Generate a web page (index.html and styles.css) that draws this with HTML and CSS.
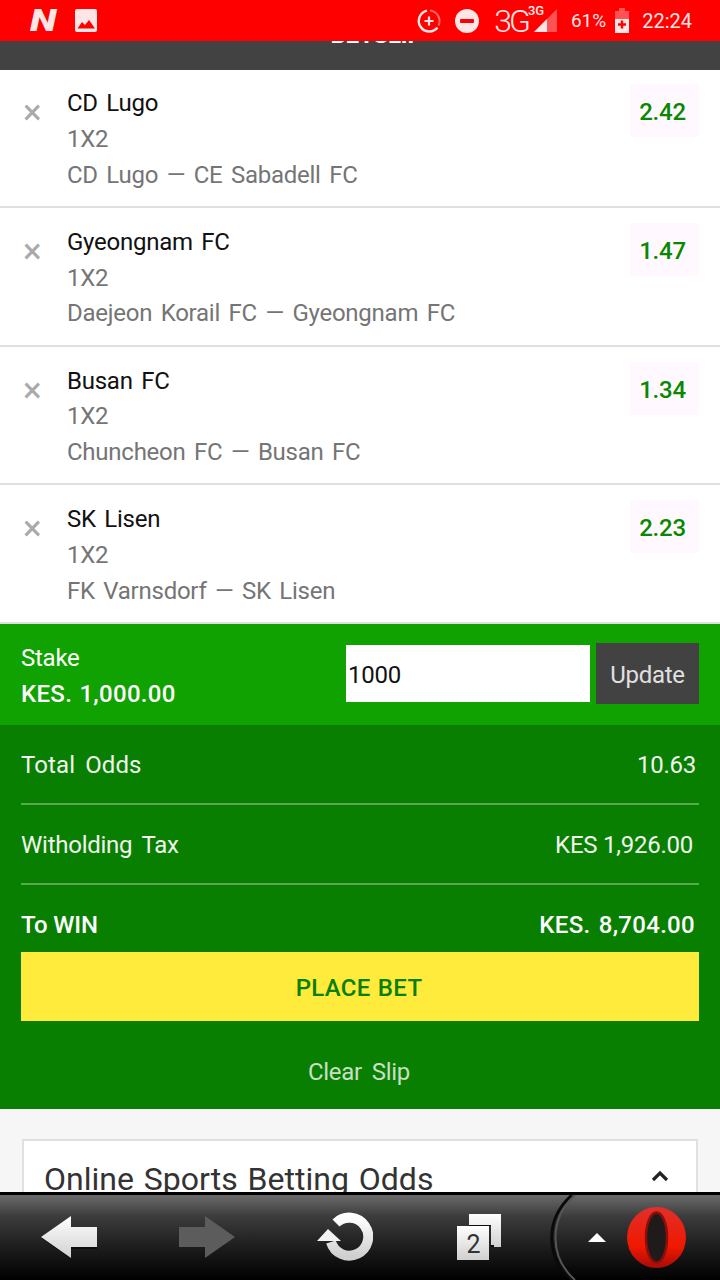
FILE: index.html
```html
<!DOCTYPE html>
<html lang="en">
<head>
  <meta charset="UTF-8" />
  <meta name="viewport" content="width=device-width, initial-scale=1.0" />
  <title>Betslip</title>
  <link rel="stylesheet" href="styles.css">
</head>
<body>
  <!-- Phone status bar -->
  <div class="status-bar">
    <span class="app-n">N</span>
    <svg class="icon-picture" width="22" height="23" viewBox="0 0 22 23">
      <path fill="#ffe6e6" d="M2 0h18a2 2 0 0 1 2 2v19a2 2 0 0 1-2 2H2a2 2 0 0 1-2-2V2a2 2 0 0 1 2-2z"/>
      <path fill="#f00" d="M2.500 19.500L7 13l3 3 4-5 6 8.500z"/>
    </svg>
    <div class="status-right">
      <svg class="icon-data" width="26" height="26" viewBox="0 0 26 26">
        <path d="M14 2.600A10.500 10.500 0 0 1 22.500 17.500" fill="none" stroke="#ff6a6a" stroke-width="2"/>
        <path d="M11 2.700A10.500 10.500 0 1 0 21.500 19.500" fill="none" stroke="#ffe6e6" stroke-width="2.400"/>
        <path d="M13 8.500v9M8.500 13h9" stroke="#ffe6e6" stroke-width="2.200"/>
      </svg>
      <svg class="icon-dnd" width="24" height="24" viewBox="0 0 24 24">
        <circle cx="12" cy="12" r="12" fill="#ffe6e6"/>
        <rect x="5" y="10" width="14" height="4" rx="1" fill="#f00"/>
      </svg>
      <span class="net-big">3G</span>
      <div class="signal">
        <span class="net-small">3G</span>
        <svg width="23" height="23" viewBox="0 0 23 23">
          <path fill="#ff5252" d="M23 0v23H0z"/>
          <path fill="#ffe6e6" d="M13 10v13H0z"/>
        </svg>
      </div>
      <span class="battery-pct">61%</span>
      <svg class="icon-battery" width="14" height="25" viewBox="0 0 14 25">
        <path fill="#ff5252" d="M4 0h6v3h4v8H0V3h4z"/>
        <path fill="#ffe6e6" d="M0 11h14v14H0z"/>
        <path d="M7 12.500v8M3 16.500h8" stroke="#f00" stroke-width="2.400"/>
      </svg>
      <span class="clock">22:24</span>
    </div>
  </div>

  <div class="page">
    <div class="slip-header"><span class="slip-title">BETSLIP</span></div>

    <div class="bets">
      <div class="bet">
        <span class="bet-remove">&times;</span>
        <div class="bet-info">
          <div class="bet-pick">CD Lugo</div>
          <div class="bet-meta">1X2</div>
          <div class="bet-meta">CD Lugo — CE Sabadell FC</div>
        </div>
        <div class="bet-odds">2.42</div>
      </div>
      <div class="bet">
        <span class="bet-remove">&times;</span>
        <div class="bet-info">
          <div class="bet-pick">Gyeongnam FC</div>
          <div class="bet-meta">1X2</div>
          <div class="bet-meta">Daejeon Korail FC — Gyeongnam FC</div>
        </div>
        <div class="bet-odds">1.47</div>
      </div>
      <div class="bet">
        <span class="bet-remove">&times;</span>
        <div class="bet-info">
          <div class="bet-pick">Busan FC</div>
          <div class="bet-meta">1X2</div>
          <div class="bet-meta">Chuncheon FC — Busan FC</div>
        </div>
        <div class="bet-odds">1.34</div>
      </div>
      <div class="bet">
        <span class="bet-remove">&times;</span>
        <div class="bet-info">
          <div class="bet-pick">SK Lisen</div>
          <div class="bet-meta">1X2</div>
          <div class="bet-meta">FK Varnsdorf — SK Lisen</div>
        </div>
        <div class="bet-odds">2.23</div>
      </div>
    </div>

    <div class="stake">
      <div class="stake-label">
        <div>Stake</div>
        <strong>KES. 1,000.00</strong>
      </div>
      <input class="stake-input" type="text" value="1000" />
      <button class="stake-update">Update</button>
    </div>

    <div class="summary">
      <div class="summary-row"><span class="label-odds">Total Odds</span><span class="val-odds">10.63</span></div>
      <div class="summary-row"><span>Witholding Tax</span><span class="val-tax">KES 1,926.00</span></div>
      <div class="summary-win"><span class="win-label">To WIN</span><span>KES. 8,704.00</span></div>
      <button class="place-bet">PLACE BET</button>
      <div class="clear-slip">Clear Slip</div>
    </div>

    <div class="info">
      <div class="info-card">
        <span class="info-title">Online Sports Betting Odds</span>
        <svg class="info-chevron" width="18" height="12" viewBox="0 0 18 12">
          <path d="M2 10l7-7 7 7" fill="none" stroke="#222" stroke-width="3.200"/>
        </svg>
      </div>
    </div>
  </div>

  <!-- Opera Mini toolbar -->
  <div class="toolbar">
    <svg class="tb-back" width="56" height="85" viewBox="0 0 56 85">
      <path fill="#0c0c0c" d="M0 43L30 22V33H56V54H30V64z"/>
      <path fill="url(#iconWhite)" d="M0 42L30 21V32H56V52H30V63z"/>
    </svg>
    <svg class="tb-forward" width="56" height="85" viewBox="0 0 56 85">
      <path fill="#5c5c5c" d="M56 42L26 21V32H0V52H26V63z"/>
    </svg>
    <svg class="tb-reload" width="56" height="85" viewBox="0 0 56 85">
      <path d="M19 28A19 19 0 1 1 14 47" fill="none" stroke="url(#iconWhite)" stroke-width="10"/>
      <path fill="#f2f2f2" d="M11 34L0 46H24z"/>
    </svg>
    <svg class="tb-tabs" width="44" height="85" viewBox="0 0 44 85">
      <path fill="url(#iconWhite)" d="M12 19H44V52H34V30H12z"/>
      <path fill="#0c0c0c" d="M34 52h3v-2h-3zM12 30h22v1H12z"/>
      <rect x="0" y="31" width="32" height="34" fill="url(#iconWhite)"/>
      <text class="tab-count" x="16.500" y="58" text-anchor="middle">2</text>
    </svg>
    <svg class="tb-opera" width="172" height="85" viewBox="0 0 172 85">
      <defs>
        <linearGradient id="iconWhite" x1="0" y1="0" x2="0" y2="1">
          <stop offset="0" stop-color="#fff"/>
          <stop offset="1" stop-color="#d0d0d0"/>
        </linearGradient>
        <linearGradient id="operaRed" x1="0" y1="0" x2="0" y2="1">
          <stop offset="0" stop-color="#e0302a"/>
          <stop offset="0.65" stop-color="#f01800"/>
          <stop offset="1" stop-color="#a80c08"/>
        </linearGradient>
      </defs>
      <path d="M24 0C-3 24-3 62 24 85" fill="none" stroke="#0a0a0a" stroke-width="3"/>
      <path d="M27 0C1 24 1 62 27 85" fill="none" stroke="#555" stroke-width="2"/>
      <path fill="#fff" d="M49 38l9 9H40z"/>
      <ellipse cx="108.500" cy="42.500" rx="29.500" ry="30.500" fill="url(#operaRed)"/>
      <ellipse cx="108.500" cy="42.500" rx="10.500" ry="25" fill="#1f1b1b" stroke="#8a0f0a" stroke-width="2.500"/>
    </svg>
  </div>
</body>
</html>
```

FILE: styles.css
```css
/* Base styling */
html, body {
  margin: 0;
  height: 1280px;
  overflow: hidden;
}
body {
  display: flex;
  flex-direction: column;
  font-family: Roboto, "Liberation Sans", sans-serif;
  font-size: 24px;
  letter-spacing: -0.25px;
  word-spacing: 2.8px;
  background: #f6f6f6;
}

/* Status bar */
.status-bar {
  flex: none;
  height: 41px;
  display: flex;
  align-items: center;
  padding: 0 28px 0 30px;
  background: #f00;
  color: #ffe6e6;
  position: relative;
  z-index: 2;
  letter-spacing: 0;
}
.app-n {
  display: inline-block;
  width: 45px;
  font-size: 31px;
  font-weight: 900;
  font-style: italic;
  transform: scaleX(1.25);
  transform-origin: left center;
}
.status-right {
  margin-left: auto;
  display: flex;
  align-items: center;
}
.icon-dnd { margin-left: 13px; }
.net-big {
  margin-left: 15px;
  font-size: 32px;
  font-weight: 300;
  letter-spacing: -3px;
}
.signal {
  box-sizing: border-box;
  position: relative;
  width: 29px;
  height: 32px;
  padding-bottom: 4.5px;
  display: flex;
  align-items: flex-end;
  justify-content: flex-end;
}
.net-small {
  position: absolute;
  left: 0;
  top: -2px;
  font-size: 13px;
  font-weight: 500;
}
.battery-pct {
  margin-left: 14px;
  font-size: 19px;
}
.icon-battery { margin-left: 9px; }
.clock {
  margin-left: 13px;
  font-size: 20px;
}

.page {
  flex: 1;
  min-height: 0;
  overflow: hidden;
}

.slip-header {
  height: 29px;
  overflow: hidden;
  padding-left: 33px;
  background: #424242;
  color: #fff;
  text-align: center;
  font-weight: 700;
  font-size: 24px;
}
.slip-title {
  display: block;
  margin-top: -19px;
  line-height: 27px;
}

/* Bets */
.bet {
  box-sizing: border-box;
  height: 138.67px;
  display: flex;
  padding: 15.97px 21px 0 21px;
  background: #fff;
  border-bottom: 2px solid #e0e0e0;
}
.bet:first-child {
  height: 138px;
  padding-top: 15.3px;
}
.bet-remove {
  box-sizing: border-box;
  width: 46px;
  margin-top: 10px;
  padding-left: 2px;
  color: #aaa;
  font-size: 35px;
  line-height: 36px;
}
.bet-info {
  flex: 1;
  padding-top: 1px;
  line-height: 35.7px;
}
.bet-pick { color: #111; }
.bet-meta { color: #757575; }
.bet-odds {
  box-sizing: border-box;
  width: 69px;
  height: 53px;
  margin-top: -1px;
  padding-right: 4px;
  line-height: 56px;
  text-align: center;
  color: #088800;
  font-weight: 500;
  background: #fff8ff;
}

/* Stake */
.stake {
  box-sizing: border-box;
  height: 101px;
  display: flex;
  align-items: center;
  padding: 0 21px 2px;
  background: #10a200;
  color: #fff;
}
.stake-label {
  flex: 1;
  padding-top: 6px;
  line-height: 36px;
}
.stake-label strong {
  font-weight: 500;
  letter-spacing: 0.3px;
  word-spacing: 1px;
}
.stake-input {
  box-sizing: border-box;
  width: 244px;
  height: 57px;
  padding: 4px 2px 0;
  border: none;
  border-radius: 0;
  background: #fff;
  color: #111;
  font: inherit;
  letter-spacing: inherit;
}
.stake-update {
  box-sizing: border-box;
  width: 103px;
  height: 61px;
  margin-left: 6px;
  padding: 4px 0 0;
  border: none;
  background: #424242;
  color: #e0e0e0;
  font: inherit;
  letter-spacing: inherit;
}

/* Totals */
.summary {
  box-sizing: border-box;
  height: 384px;
  padding: 0 21px;
  background: #087f00;
  color: #f0f5ee;
  word-spacing: 4px;
}
.summary-row {
  box-sizing: border-box;
  height: 80px;
  padding-top: 3px;
  display: flex;
  justify-content: space-between;
  align-items: center;
  border-bottom: 2px solid #5aa852;
}
.label-odds { letter-spacing: 0.1px; }
.val-odds { margin-right: 3px; }
.val-tax { margin-right: 6px; word-spacing: 0; }
.summary-win {
  box-sizing: border-box;
  height: 67px;
  padding: 14px 4px 0 0;
  display: flex;
  justify-content: space-between;
  align-items: center;
  font-weight: 500;
  color: #fff;
  letter-spacing: 0.3px;
  word-spacing: 2px;
}
.win-label {
  letter-spacing: -0.1px;
  word-spacing: 0;
}
.place-bet {
  display: block;
  width: 100%;
  height: 69px;
  padding: 3px 2px 0 0;
  border: none;
  background: #ffeb3b;
  color: #087f00;
  font: inherit;
  font-weight: 500;
  letter-spacing: 0.3px;
  word-spacing: 1px;
}
.clear-slip {
  margin-top: 33px;
  padding-right: 2px;
  line-height: 36px;
  text-align: center;
  color: #c9dfc5;
}

/* SEO block under the slip */
.info { padding: 30px 22px 0; }
.info-card {
  box-sizing: border-box;
  height: 120px;
  display: flex;
  justify-content: space-between;
  align-items: flex-start;
  padding: 20px 27px 0 20px;
  background: #fff;
  border: 2px solid #e0e0e0;
}
.info-title {
  font-size: 32px;
  line-height: 36px;
  letter-spacing: 0;
  word-spacing: 2px;
  color: #333;
}
.info-chevron { margin-top: 9px; }

/* Toolbar */
.toolbar {
  flex: none;
  height: 85px;
  display: flex;
  padding-left: 41px;
  border-top: 3px solid #000;
  background: linear-gradient(#6a6a6a, #3c3c3c 25%, #1e1e1e 60%, #000);
}
.tb-forward { margin-left: 82px; }
.tb-reload { margin-left: 82px; }
.tb-tabs { margin-left: 84px; }
.tb-opera { margin-left: 47px; }
.tab-count {
  font-size: 25px;
  fill: #333;
}
```
